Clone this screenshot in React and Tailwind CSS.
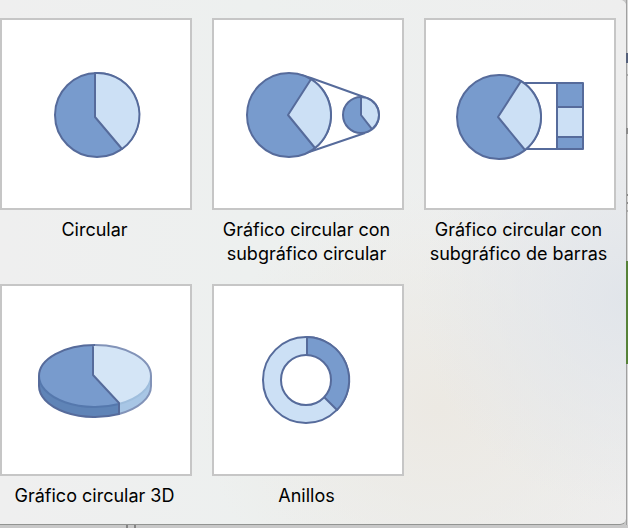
const ink = "#566b9b";
const dark = "#789bcd";
const light = "#cce0f5";

function PieIcon() {
  return (
    <svg viewBox="0 0 188 188" className="w-full" aria-hidden="true">
      <g stroke={ink} strokeWidth="2" strokeLinejoin="round">
        <circle cx="95" cy="95" r="42" fill={dark} />
        <path d="M93 53A42 42 0 0 1 120 129L93 97Z" fill={light} />
      </g>
    </svg>
  );
}

function PieOfPieIcon() {
  return (
    <svg viewBox="0 0 188 188" className="w-full" aria-hidden="true">
      <g stroke={ink} strokeWidth="2" strokeLinejoin="round">
        <path d="M87 55L97 58L150 77M92 133L101 130L151 113" fill="none" />
        <circle cx="75" cy="95" r="42" fill={dark} />
        <path d="M97 59.200A42 42 0 0 1 101 128L74 95Z" fill={light} />
        <circle cx="147" cy="95" r="18" fill={dark} />
        <path d="M147 77A18 18 0 0 1 158 109.200L147 95Z" fill={light} />
      </g>
    </svg>
  );
}

function BarOfPieIcon() {
  return (
    <svg viewBox="0 0 188 188" className="w-full" aria-hidden="true">
      <g stroke={ink} strokeWidth="2" strokeLinejoin="round">
        <path d="M94 63H131M98 129H131" fill="none" />
        <circle cx="73" cy="97" r="42" fill={dark} />
        <path d="M95 61.200A42 42 0 0 1 99 130L72 97Z" fill={light} />
        <rect x="131" y="63" width="26" height="66" fill={dark} />
        <rect x="131" y="87" width="26" height="30" fill={light} />
      </g>
    </svg>
  );
}

function Pie3DIcon() {
  return (
    <svg viewBox="0 0 188 188" className="w-full" aria-hidden="true">
      <path d="M37 90V100A56 31 0 0 0 117 128V90Z" fill="#5f84b7" />
      <path d="M117 90V128A56 31 0 0 0 149 100V90Z" fill="#a8c6e5" />
      <ellipse cx="93" cy="90" rx="56" ry="31" fill={dark} />
      <path d="M91 89V59H93A56 31 0 0 1 149 90A56 31 0 0 1 117 118Z" fill="#d4e5f6" />
      <g fill="none" strokeWidth="2" strokeLinejoin="round">
        <path d="M37 90A56 31 0 0 0 117 118" stroke="#5578ad" />
        <path d="M117 118A56 31 0 0 0 149 90" stroke="#9fbedd" />
        <path
          d="M93 59A56 31 0 0 1 149 90V100A56 31 0 0 1 117 128"
          stroke="#8293b8"
        />
        <path
          d="M93 59A56 31 0 0 0 37 90V100A56 31 0 0 0 117 128V117L91 89V59"
          stroke={ink}
        />
      </g>
    </svg>
  );
}

function DoughnutIcon() {
  return (
    <svg viewBox="0 0 188 188" className="w-full" aria-hidden="true">
      <g stroke={ink} strokeWidth="2" strokeLinejoin="round">
        <circle cx="92" cy="94" r="43" fill={light} />
        <path d="M93 51A43 43 0 0 1 123 124L93 94Z" fill={dark} />
        <circle cx="92" cy="94" r="25" fill="white" />
      </g>
    </svg>
  );
}

const chartTypes = [
  { label: "Circular", Icon: PieIcon },
  { label: "Gráfico circular con subgráfico circular", Icon: PieOfPieIcon },
  { label: "Gráfico circular con subgráfico de barras", Icon: BarOfPieIcon },
  { label: "Gráfico circular 3D", Icon: Pie3DIcon },
  { label: "Anillos", Icon: DoughnutIcon },
];

export default function App() {
  return (
    <div className="bg-[#c8c8c8] font-[Inter,'Liberation_Sans',sans-serif]">
      <div className="flex">
        {/* Chart gallery */}
        <main className="min-w-0 flex-1 rounded-r-md border-b border-[#929492] bg-[#eff0f0] bg-[radial-gradient(circle_at_100%_57%,#e1e5ea_0%,transparent_30%),radial-gradient(ellipse_at_70%_78%,#ece9e3_0%,transparent_38%),linear-gradient(90deg,#efefef,#edf0ef_40%,#eeeeee)] pt-[18px] pb-4">
          <div className="grid grid-cols-[repeat(auto-fill,192px)] gap-x-5 gap-y-[18px]">
            {chartTypes.map(({ label, Icon }) => (
              <button
                key={label}
                type="button"
                className="flex flex-col items-center gap-2 focus:outline-none"
              >
                <span className="block w-full border-2 border-[#c6c6c6] bg-white">
                  <Icon />
                </span>
                <span className="w-full pr-[3px] text-center text-[18px] leading-6 text-black">
                  {label}
                </span>
              </button>
            ))}
          </div>
        </main>

        {/* Sliver of the window behind the gallery */}
        <div className="flex w-[2px] flex-col border-l border-[#a0a0a0] bg-[#d6d6d6]">
          <div className="-ml-px mt-[53px] h-[10px] bg-[#55607a]" />
          <div className="mt-[11px] h-[2px] bg-[#a8a8a8]" />
          <div className="-ml-px mt-[52px] h-[6px] bg-[#8a8a8a]" />
          <div className="mt-[60px] h-[2px] bg-[#8a8a8a]" />
          <div className="mt-[6px] h-[2px] bg-[#8a8a8a]" />
          <div className="mt-[6px] h-[2px] bg-[#a8a8a8]" />
          <div className="-ml-px mt-[49px] h-[103px] bg-[#568238]" />
        </div>
      </div>
      <div className="flex h-[3px]">
        <div className="w-[126px]" />
        <div className="w-[10px] border-x-2 border-[#858585]" />
      </div>
    </div>
  );
}
